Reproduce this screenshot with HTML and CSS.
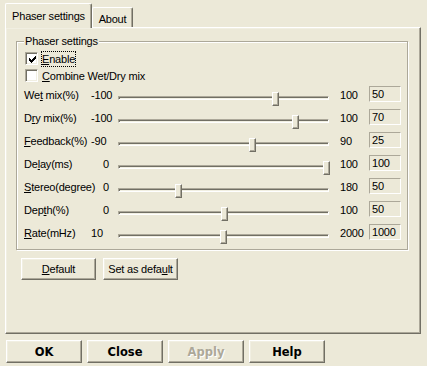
FILE: index.html
```html
<!DOCTYPE html>
<html>
<head>
<meta charset="utf-8">
<link rel="stylesheet" href="styles.css">
</head>
<body>
<div class="dialog">
  <div class="tabs">
    <div class="tab active">Phaser settings</div>
    <div class="tab about">About</div>
  </div>
  <div class="panel">
    <div class="group">
      <div class="group-title">Phaser settings</div>
      <div class="check first">
        <span class="cbox"><svg width="7" height="7" viewBox="0 0 7 7" shape-rendering="crispEdges"><path d="M0 2h1v3H0zM1 3h1v3H1zM2 4h1v3H2zM3 3h1v3H3zM4 2h1v3H4zM5 1h1v3H5zM6 0h1v3H6z" fill="#000"/></svg></span>
        <span class="clabel focus"><u>E</u>nable</span>
      </div>
      <div class="check">
        <span class="cbox"></span>
        <span class="clabel"><u>C</u>ombine Wet/Dry mix</span>
      </div>
      <div class="sliders">
        <div class="row">
          <span class="lbl">We<u>t</u> mix(%)</span><span class="min">-100</span>
          <span class="track"><span class="groove"></span><span class="thumb" style="--p:0.75"></span></span>
          <span class="max">100</span><span class="val">50</span>
        </div>
        <div class="row">
          <span class="lbl">D<u>r</u>y mix(%)</span><span class="min">-100</span>
          <span class="track"><span class="groove"></span><span class="thumb" style="--p:0.85"></span></span>
          <span class="max">100</span><span class="val">70</span>
        </div>
        <div class="row">
          <span class="lbl"><u>F</u>eedback(%)</span><span class="min">-90</span>
          <span class="track"><span class="groove"></span><span class="thumb" style="--p:0.639"></span></span>
          <span class="max">90</span><span class="val">25</span>
        </div>
        <div class="row">
          <span class="lbl">De<u>l</u>ay(ms)</span><span class="min zero">0</span>
          <span class="track"><span class="groove"></span><span class="thumb" style="--p:1"></span></span>
          <span class="max">100</span><span class="val">100</span>
        </div>
        <div class="row">
          <span class="lbl"><u>S</u>tereo(degree)</span><span class="min zero">0</span>
          <span class="track"><span class="groove"></span><span class="thumb" style="--p:0.278"></span></span>
          <span class="max">180</span><span class="val">50</span>
        </div>
        <div class="row">
          <span class="lbl">Dep<u>t</u>h(%)</span><span class="min zero">0</span>
          <span class="track"><span class="groove"></span><span class="thumb" style="--p:0.5"></span></span>
          <span class="max">100</span><span class="val">50</span>
        </div>
        <div class="row">
          <span class="lbl"><u>R</u>ate(mHz)</span><span class="min">10</span>
          <span class="track"><span class="groove"></span><span class="thumb" style="--p:0.4975"></span></span>
          <span class="max">2000</span><span class="val">1000</span>
        </div>
      </div>
    </div>
    <div class="panel-buttons">
      <button class="btn small"><u>D</u>efault</button>
      <button class="btn small">Set as defa<u>u</u>lt</button>
    </div>
  </div>
  <div class="buttons">
    <button class="btn big">OK</button>
    <button class="btn big">Close</button>
    <button class="btn big disabled">Apply</button>
    <button class="btn big">Help</button>
  </div>
</div>
</body>
</html>
```
FILE: styles.css
```css
html, body {
  margin: 0;
  padding: 0;
  background: #ece9d8;
}
body {
  font-family: "Liberation Sans", Arial, sans-serif;
  font-size: 11px;
  letter-spacing: -0.2px;
  color: #000;
}
u {
  text-decoration-thickness: 1px;
  text-underline-offset: 1px;
}
.dialog {
  width: 427px;
  height: 366px;
  box-sizing: border-box;
  padding: 3px 0 0 5px;
}
.tabs {
  display: flex;
  align-items: flex-end;
  height: 24px;
}
.tab {
  box-sizing: border-box;
  border: 1px solid;
  border-color: #fff #716f64 transparent #fff;
  border-bottom: none;
  border-radius: 2px 2px 0 0;
  box-shadow: inset -1px 0 0 #aca899;
  line-height: 14px;
  text-align: center;
  background: #ece9d8;
}
.tab.active {
  width: 87px;
  height: 25px;
  margin-bottom: -1px;
  padding-top: 5px;
  position: relative;
  z-index: 1;
}
.tab.about {
  width: 41px;
  height: 20px;
  padding-top: 4px;
}
.panel {
  box-sizing: border-box;
  width: 416px;
  height: 307px;
  border: 1px solid;
  border-color: #fff #716f64 #716f64 #fff;
  box-shadow: inset -1px -1px 0 #aca899, inset 1px 1px 0 #f1efe2;
  padding: 13px 0 0 10px;
}
.group {
  box-sizing: border-box;
  width: 392px;
  height: 209px;
  border: 1px solid #aca899;
  box-shadow: 1px 1px 0 #fff, inset 1px 1px 0 #fff;
}
.group-title {
  width: max-content;
  margin: -8px 0 0 7px;
  padding: 0 1px;
  line-height: 14px;
  background: #ece9d8;
}
.check {
  display: flex;
  align-items: center;
  height: 17px;
  margin-left: 8px;
}
.check.first {
  margin-top: 2px;
}
.cbox {
  box-sizing: border-box;
  width: 13px;
  height: 13px;
  border: 1px solid;
  border-color: #aca899 #fff #fff #aca899;
  box-shadow: inset 1px 1px 0 #716f64, inset -1px -1px 0 #f1efe2;
  background: #fff;
  padding: 2px 0 0 2px;
  flex: none;
}
.cbox svg {
  display: block;
  margin: 1px 0 0 1px;
}
.clabel {
  margin-left: 4px;
  line-height: 14px;
}
.focus {
  outline: 1px dotted #000;
  outline-offset: 0px;
}
.sliders {
  padding-left: 7px;
}
.row {
  display: grid;
  grid-template-columns: 67px 27px 211px 40px 32px;
  height: 23px;
}
.lbl, .min, .max {
  line-height: 14px;
  margin-top: 4px;
  white-space: nowrap;
}
.min.zero {
  padding-left: 12px;
}
.max {
  padding-left: 11px;
}
.track {
  position: relative;
  height: 23px;
}
.groove {
  position: absolute;
  left: 0;
  right: 0;
  top: 12px;
  height: 4px;
  box-sizing: border-box;
  border: 1px solid;
  border-color: #aca899 #fff #fff #aca899;
  box-shadow: inset 1px 1px 0 #716f64, inset -1px -1px 0 #f1efe2;
}
.thumb {
  position: absolute;
  top: 8px;
  left: calc(var(--p) * 205px);
  width: 7px;
  height: 14px;
  box-sizing: border-box;
  border: 1px solid;
  border-color: #fff #716f64 #716f64 #fff;
  box-shadow: inset -1px -1px 0 #aca899;
  background: #ece9d8;
}
.val {
  box-sizing: border-box;
  height: 16px;
  margin-top: 2px;
  border: 1px solid;
  border-color: #aca899 #fff #fff #aca899;
  padding-left: 2px;
  line-height: 14px;
  overflow: hidden;
}
.panel-buttons {
  display: flex;
  gap: 7px;
  margin: 8px 0 0 5px;
}
.btn {
  box-sizing: border-box;
  border: 1px solid;
  border-color: #fff #716f64 #716f64 #fff;
  box-shadow: inset -1px -1px 0 #aca899, inset 1px 1px 0 #f1efe2;
  background: #ece9d8;
  color: #000;
  padding: 0;
  margin: 0;
  font: inherit;
  letter-spacing: inherit;
}
.btn.small {
  width: 75px;
  height: 22px;
}
.buttons {
  display: flex;
  gap: 5px;
  margin: 6px 0 0 1px;
}
.btn.big {
  width: 76px;
  height: 23px;
  font-family: "DejaVu Sans", Verdana, sans-serif;
  font-weight: bold;
  font-size: 11.5px;
  letter-spacing: 0;
}
.btn.disabled {
  color: #aca899;
  text-shadow: 1px 1px 0 #fff;
}
```
